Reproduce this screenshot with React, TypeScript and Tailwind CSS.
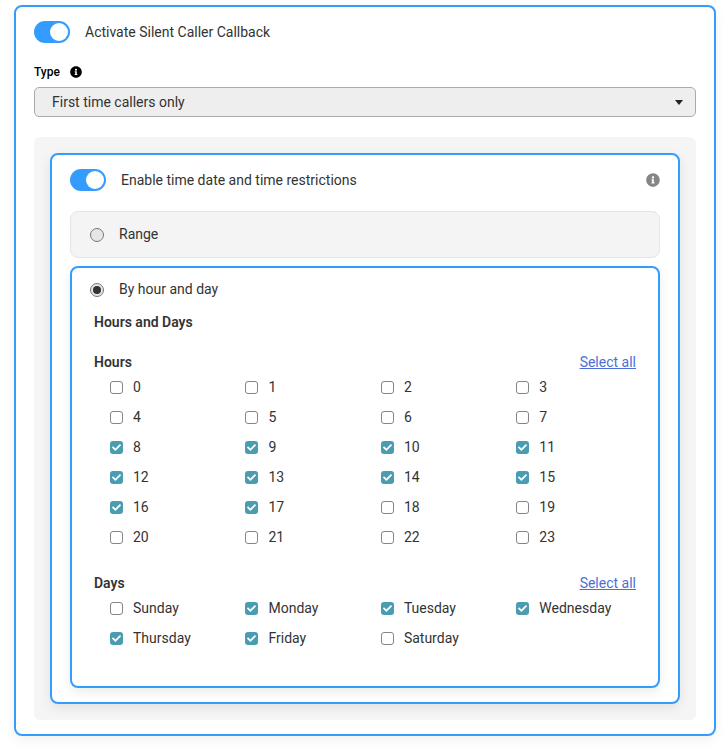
import { FaCheck, FaInfoCircle } from 'react-icons/fa';

const hours = Array.from({ length: 24 }, (_, i) => i);
const checkedHours = [8, 9, 10, 11, 12, 13, 14, 15, 16, 17];
const days = ['Sunday', 'Monday', 'Tuesday', 'Wednesday', 'Thursday', 'Friday', 'Saturday'];
const checkedDays = ['Monday', 'Tuesday', 'Wednesday', 'Thursday', 'Friday'];

function Toggle() {
  return (
    <div className="flex h-[22px] w-[36px] shrink-0 items-center justify-end rounded-full bg-[#349cff] pr-[2px]">
      <div className="h-[18px] w-[18px] rounded-full bg-white" />
    </div>
  );
}

function Check({ label, checked }: { label: string; checked: boolean }) {
  return (
    <div className="flex h-[30px] items-center">
      {checked ? (
        <div className="flex h-[13px] w-[13px] items-center justify-center rounded-[3px] bg-[#4a9cb0]">
          <FaCheck className="h-[9px] w-[9px] text-white" />
        </div>
      ) : (
        <div className="h-[13px] w-[13px] rounded-[3px] border border-[#858585] bg-white" />
      )}
      <span className="ml-[10px] text-sm text-[#333]">{label}</span>
    </div>
  );
}

function SectionHead({ title }: { title: string }) {
  return (
    <div className="flex items-center justify-between">
      <span className="text-sm font-semibold text-[#333]">{title}</span>
      <a className="text-sm text-[#4c6fd6] underline">Select all</a>
    </div>
  );
}

export default function App() {
  return (
    <div className="bg-white pt-[5px] pb-[12px] pl-[14px] font-['Roboto',sans-serif]">
      <div className="w-[702px] rounded-[8px] border-2 border-[#349cff] bg-white px-[18px] pt-[14px] pb-[14px] shadow-[0_4px_12px_rgba(0,0,0,0.06)]">
        <div className="flex items-center">
          <Toggle />
          <span className="ml-[15px] text-sm text-[#333]">Activate Silent Caller Callback</span>
        </div>

        <div className="mt-[21px] flex h-[16px] items-center">
          <span className="text-xs font-medium text-black">Type</span>
          <FaInfoCircle className="ml-[10px] h-[12px] w-[12px] text-black" />
        </div>

        <div className="mt-[7px] flex h-[30px] items-center justify-between rounded-[5px] border border-[#ababab] bg-[#eeeeee] pr-[12px] pl-[17px]">
          <span className="text-sm text-[#333]">First time callers only</span>
          <div className="h-0 w-0 border-x-[4.5px] border-t-[5px] border-x-transparent border-t-[#222]" />
        </div>

        <div className="mt-[20px] rounded-[6px] bg-[#f5f5f5] p-[16px]">
          <div className="rounded-[8px] border-2 border-[#349cff] bg-white px-[18px] pt-[14px] pb-[14px] shadow-[0_4px_12px_rgba(0,0,0,0.08)]">
            <div className="flex items-center">
              <Toggle />
              <span className="ml-[15px] text-sm text-[#333]">Enable time date and time restrictions</span>
              <FaInfoCircle className="ml-auto h-[14px] w-[14px] text-[#858585]" />
            </div>

            <div className="mt-[20px] flex h-[47px] items-center rounded-[8px] border border-[#e5e5e5] bg-[#f4f4f4] pl-[19px]">
              <div className="h-[14px] w-[14px] rounded-full border border-[#777] bg-[#e6e6e6]" />
              <span className="ml-[15px] pb-[2px] text-sm text-[#333]">Range</span>
            </div>

            <div className="mt-[8px] h-[422px] rounded-[8px] border-2 border-[#349cff] bg-white pt-[12px] pr-[22px] pl-[18px] shadow-[0_4px_12px_rgba(0,0,0,0.08)]">
              <div className="flex h-[20px] items-center">
                <div className="flex h-[14px] w-[14px] items-center justify-center rounded-full border border-[#777] bg-[#e6e6e6]">
                  <div className="h-[8px] w-[8px] rounded-full bg-[#333]" />
                </div>
                <span className="ml-[15px] pb-[2px] text-sm text-[#333]">By hour and day</span>
              </div>

              <div className="mt-[12px] ml-[4px]">
                <div className="text-sm font-semibold text-[#333]">Hours and Days</div>

                <div className="mt-[20px]">
                  <SectionHead title="Hours" />
                  <div className="ml-[16px] grid w-[541.8px] grid-cols-4">
                    {hours.map((h) => (
                      <Check key={h} label={String(h)} checked={checkedHours.includes(h)} />
                    ))}
                  </div>
                </div>

                <div className="mt-[21px]">
                  <SectionHead title="Days" />
                  <div className="ml-[16px] grid w-[541.8px] grid-cols-4">
                    {days.map((d) => (
                      <Check key={d} label={d} checked={checkedDays.includes(d)} />
                    ))}
                  </div>
                </div>
              </div>
            </div>
          </div>
        </div>
      </div>
    </div>
  );
}
